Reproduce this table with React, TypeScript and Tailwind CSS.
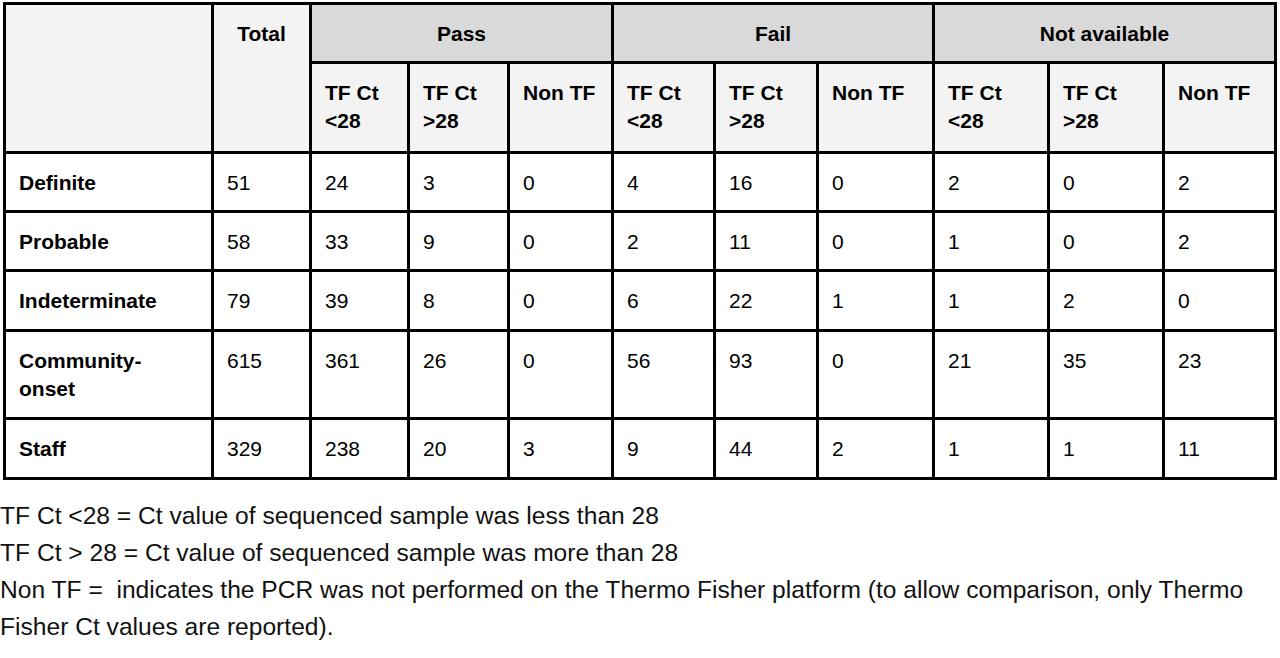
const rows: { label: string; values: string[] }[] = [
  { label: "Definite", values: ["51", "24", "3", "0", "4", "16", "0", "2", "0", "2"] },
  { label: "Probable", values: ["58", "33", "9", "0", "2", "11", "0", "1", "0", "2"] },
  { label: "Indeterminate", values: ["79", "39", "8", "0", "6", "22", "1", "1", "2", "0"] },
  { label: "Community-\nonset", values: ["615", "361", "26", "0", "56", "93", "0", "21", "35", "23"] },
  { label: "Staff", values: ["329", "238", "20", "3", "9", "44", "2", "1", "1", "11"] },
]

const colWidths = [208, 98, 98, 100, 104, 102, 103, 116, 115, 115, 112]
const rowHeights = ["h-[59px]", "h-[59px]", "h-[60px]", "h-[88px]", "h-[60px]"]

const groups = ["Pass", "Fail", "Not available"]
const subHeads = ["TF Ct\n<28", "TF Ct\n>28", "Non TF"]

export default function App() {
  return (
    <div className="w-[1280px] h-[658px] bg-white text-black font-['Liberation_Sans',Arial,sans-serif] overflow-hidden">
      <div className="pl-[3px] pt-[2px]">
        <table className="table-fixed border-collapse w-[1272px] text-[21px] leading-[28px]">
          <colgroup>
            {colWidths.map((w, i) => (
              <col key={i} style={{ width: w }} />
            ))}
          </colgroup>
          <thead>
            <tr className="h-[59px]">
              <th rowSpan={2} className="border-[3px] border-black bg-[#f3f3f3]" />
              <th rowSpan={2} className="border-[3px] border-black bg-[#f3f3f3] align-top pt-[15px] font-bold text-center">
                Total
              </th>
              {groups.map((g) => (
                <th key={g} colSpan={3} className="border-[3px] border-black bg-[#d9d9d9] align-top pt-[15px] font-bold text-center">
                  {g}
                </th>
              ))}
            </tr>
            <tr className="h-[90px]">
              {groups.flatMap((g) =>
                subHeads.map((s) => (
                  <th
                    key={g + s}
                    className="border-[3px] border-black bg-[#f3f3f3] align-top pt-[15px] pl-[13px] font-bold text-left whitespace-pre-line"
                  >
                    {s}
                  </th>
                ))
              )}
            </tr>
          </thead>
          <tbody>
            {rows.map((r, i) => (
              <tr key={r.label} className={rowHeights[i]}>
                <td className="border-[3px] border-black align-top pt-[15px] pl-[13px] font-bold whitespace-pre-line">
                  {r.label}
                </td>
                {r.values.map((v, j) => (
                  <td key={j} className="border-[3px] border-black align-top pt-[15px] pl-[13px]">
                    {v}
                  </td>
                ))}
              </tr>
            ))}
          </tbody>
        </table>
      </div>
      <div className="mt-[17px] text-[24.6px] leading-[37px] text-[#111]">
        <p>TF Ct &lt;28 = Ct value of sequenced sample was less than 28</p>
        <p>TF Ct &gt; 28 = Ct value of sequenced sample was more than 28</p>
        <p className="whitespace-pre">
          {"Non TF =  indicates the PCR was not performed on the Thermo Fisher platform (to allow comparison, only Thermo"}
        </p>
        <p>Fisher Ct values are reported).</p>
      </div>
    </div>
  )
}
